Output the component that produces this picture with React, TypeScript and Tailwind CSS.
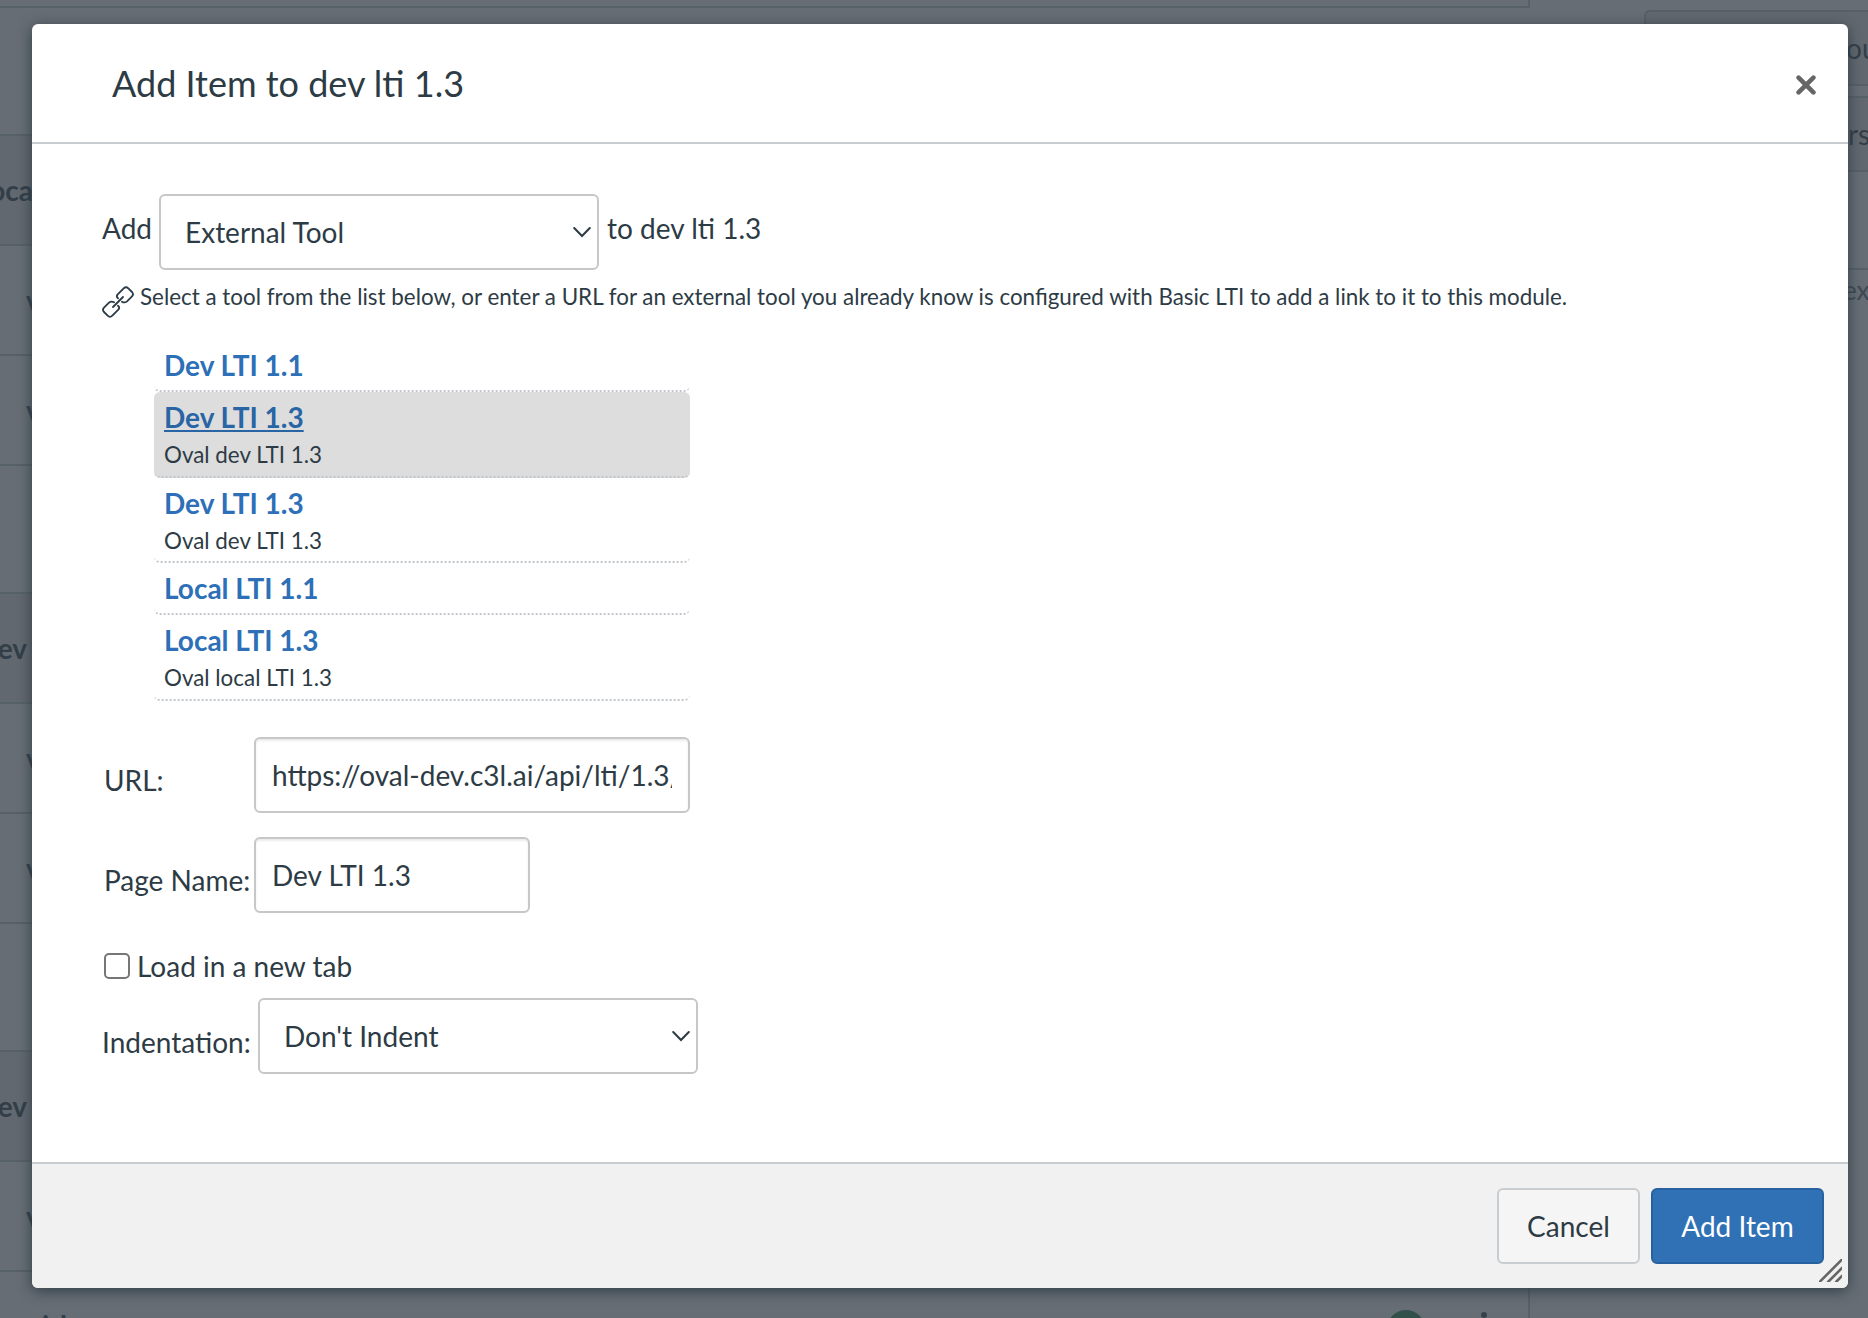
const moduleRows = [
  { height: "h-[128px]", kind: "empty", text: "" },
  { height: "h-[110px]", kind: "header", text: "Local" },
  { height: "h-[110px]", kind: "item", text: "v" },
  { height: "h-[110px]", kind: "item", text: "v" },
  { height: "h-[128px]", kind: "empty", text: "" },
  { height: "h-[110px]", kind: "header", text: "Dev" },
  { height: "h-[110px]", kind: "item", text: "v" },
  { height: "h-[110px]", kind: "item", text: "v" },
  { height: "h-[128px]", kind: "empty", text: "" },
  { height: "h-[110px]", kind: "header", text: "Dev" },
  { height: "h-[110px]", kind: "item", text: "v" },
];

const tools = [
  { name: "Dev LTI 1.1", description: "", selected: false },
  { name: "Dev LTI 1.3", description: "Oval dev LTI 1.3", selected: true },
  { name: "Dev LTI 1.3", description: "Oval dev LTI 1.3", selected: false },
  { name: "Local LTI 1.1", description: "", selected: false },
  { name: "Local LTI 1.3", description: "Oval local LTI 1.3", selected: false },
];

function Select({ text }: { text: string }) {
  return (
    <div className="flex h-[76px] w-[440px] shrink-0 items-center justify-between rounded-md border-2 border-[#c7c7c7] bg-white pr-[6px] pl-6">
      <span className="whitespace-nowrap">{text}</span>
      <svg width="18" height="12" viewBox="0 0 18 12" fill="none" stroke="#2d3b45" strokeWidth="2" strokeLinecap="round">
        <path d="M1.2 2 9 10l7.8-8" />
      </svg>
    </div>
  );
}

function TextInput({ value, width }: { value: string; width: string }) {
  return (
    <div
      className={
        "flex h-[76px] shrink-0 items-center rounded-md border-2 border-[#c7c7c7] bg-white px-4 shadow-[inset_0_2px_2px_rgba(0,0,0,0.075)] " +
        width
      }
    >
      <span className="w-full overflow-hidden whitespace-nowrap">{value}</span>
    </div>
  );
}

function LinkIcon() {
  return (
    <svg
      className="mt-[10px] shrink-0"
      width="32"
      height="32"
      viewBox="0 0 96 96"
      fill="none"
      stroke="#2d3b45"
      strokeWidth="5.5"
      strokeLinecap="round"
      strokeLinejoin="round"
    >
      <path d="M48 37C43 33 43 30 47 25L65 7Q72 0 79 7L90 18Q96 25 90 31L75 46Q68 52 60 47" />
      <path d="M48 59C53 63 53 66 49 71L31 89Q24 96 17 89L6 78Q0 71 6 65L21 50Q28 44 36 49" />
      <path d="M33 63 63 33" />
    </svg>
  );
}

function Backdrop() {
  return (
    <div className="flex h-full text-[#323e48]">
      <div className="flex w-[1530px] shrink-0 flex-col">
        <div className="h-2 shrink-0 border-r-2 border-b-2 border-[#566069]" />
        {moduleRows.map((row, i) => (
          <div
            key={i}
            className={
              "flex shrink-0 items-center border-b-2 border-[#566069] font-bold " +
              row.height +
              (row.kind === "header" ? " bg-[#62686f]" : "")
            }
          >
            {row.text === "Local" && <span className="flex w-[40px] justify-end">{row.text}</span>}
            {row.text === "Dev" && <span className="flex w-[27px] justify-end">{row.text}</span>}
            {row.kind === "item" && <span className="pl-[26px]">{row.text}</span>}
          </div>
        ))}
        <div className="flex h-[46px] shrink-0 items-start overflow-hidden border-r-2 border-[#566069] pl-[42px]">
          <span className="mt-[32px] w-[1345px] font-bold tracking-[2px]">id</span>
          <span className="mt-[38px] size-[38px] shrink-0 rounded-full bg-[#31504a]" />
          <span className="mt-[39.5px] ml-[56px] size-[6px] shrink-0 rounded-full bg-[#36424b]" />
        </div>
      </div>
      <div className="ml-[114px] flex w-[300px] shrink-0 flex-col pt-[10px]">
        <div className="flex h-[76px] shrink-0 items-center rounded-md border-2 border-[#566069] bg-[#62686f] pl-[200px]">ou</div>
        <div className="mt-[10px] flex h-[76px] shrink-0 items-center rounded-md border-2 border-[#566069] bg-[#62686f] pl-[202px]">rs</div>
        <div className="mt-[96px] border-t-2 border-[#566069] pl-[199px] text-[26px] leading-[40px] text-[#3d4953]">ext</div>
      </div>
    </div>
  );
}

export default function App() {
  return (
    <div className="relative h-[1318px] w-[1868px] overflow-hidden bg-[#666d75] font-['Lato',sans-serif] text-[28px] leading-[42px] text-[#2d3b45]">
      <Backdrop />
      <div className="absolute top-6 left-8 flex h-[1264px] w-[1816px] flex-col overflow-hidden rounded-md bg-white shadow-[0_3px_14px_rgba(45,59,69,0.95)]">
        <header className="flex h-[120px] shrink-0 items-center justify-between border-b-2 border-[#c7cdd1] pr-8 pl-20">
          <h1 className="text-[36px] leading-[54px]">Add Item to dev lti 1.3</h1>
          <svg className="mt-[4px]" width="20" height="20" viewBox="0 0 20 20" fill="none" stroke="#666" strokeWidth="4.6" strokeLinecap="round">
            <path d="M2.6 2.6 17.4 17.4M17.4 2.6 2.6 17.4" />
          </svg>
        </header>

        <main className="flex flex-1 flex-col items-start pt-[50px] pl-[70px]">
          <div className="flex items-center gap-[7px]">
            <span className="mb-2">Add</span>
            <Select text="External Tool" />
            <span className="mb-2 ml-px">to dev lti 1.3</span>
          </div>

          <div className="mt-[6px] flex h-[42px] gap-[6px]">
            <LinkIcon />
            <p className="text-[22.4px] whitespace-nowrap">
              Select a tool from the list below, or enter a URL for an external tool you already know is configured with
              Basic LTI to add a link to it to this module.
            </p>
          </div>

          <ul className="mt-[22px] ml-[52px] w-[536px]">
            {tools.map((tool, i) => (
              <li
                key={i}
                className={
                  "rounded-md border-b-2 border-dotted border-[#c2c6ca] pt-1 pb-1 pl-[10px] " +
                  (tool.selected ? "bg-[#ddd]" : "")
                }
              >
                <div
                  className={
                    "font-bold " +
                    (tool.selected
                      ? "text-[#2965a5] underline decoration-2 underline-offset-2"
                      : "text-[#2d70b7]")
                  }
                >
                  {tool.name}
                </div>
                {tool.description && <div className="text-[22.4px] leading-[33.6px]">{tool.description}</div>}
              </li>
            ))}
          </ul>

          <div className="mt-[36px] ml-[2px] flex items-center">
            <span className="mt-[10px] w-[150px] shrink-0">URL:</span>
            <TextInput value="https://oval-dev.c3l.ai/api/lti/1.3/" width="w-[436px]" />
          </div>
          <div className="mt-6 ml-[2px] flex items-center">
            <span className="mt-[10px] w-[150px] shrink-0">Page Name:</span>
            <TextInput value="Dev LTI 1.3" width="w-[276px]" />
          </div>

          <div className="mt-8 ml-[2px] flex items-center gap-[7px]">
            <span className="size-[26px] rounded-[5px] border-2 border-[#767676] bg-white" />
            <span>Load in a new tab</span>
          </div>

          <div className="mt-[11px] flex items-center">
            <span className="mt-3 w-[156px] shrink-0">Indentation:</span>
            <Select text="Don't Indent" />
          </div>
        </main>

        <footer className="flex h-[126px] shrink-0 items-start justify-end gap-[11px] border-t-2 border-[#c7cdd1] bg-[#f1f1f1] pt-6 pr-6">
          <button className="h-[76px] w-[143px] rounded-md border-2 border-[#c7cdd1] bg-[#f5f5f5]">Cancel</button>
          <button className="h-[76px] w-[173px] rounded-md border-2 border-[#2761a0] bg-[#3071b6] text-white">
            Add Item
          </button>
        </footer>

        <svg
          className="absolute right-[6px] bottom-[6px]"
          width="23"
          height="23"
          viewBox="0 0 23 23"
          fill="none"
          stroke="#666"
          strokeWidth="2.6"
        >
          <path d="M0 23.5 23.5 0M8.5 23.5 23.5 8.5M16.5 23.5 23.5 16.5" />
        </svg>
      </div>
    </div>
  );
}
